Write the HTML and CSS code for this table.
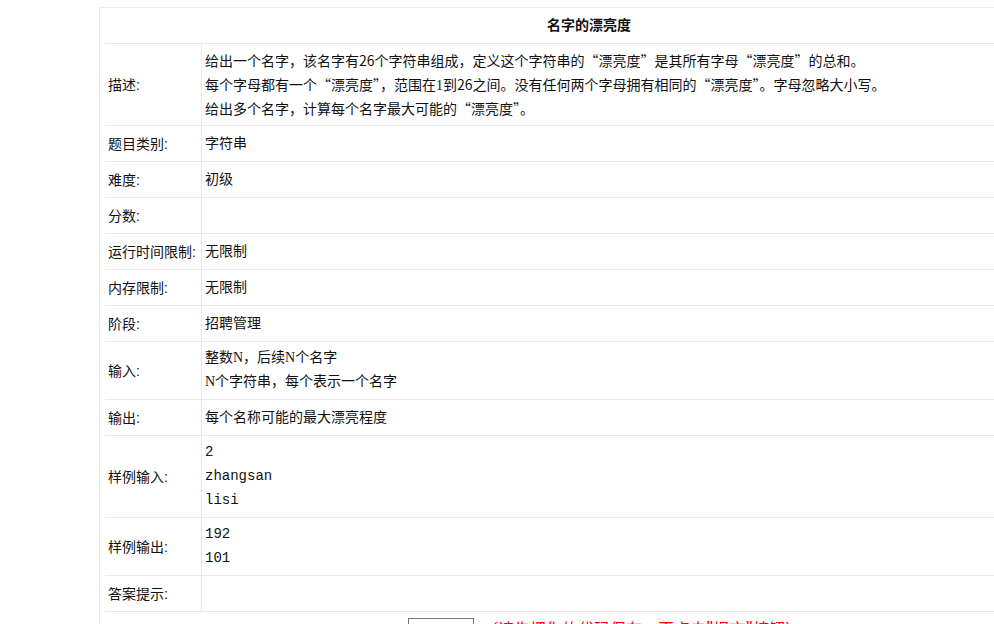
FILE: index.html
```html
<!DOCTYPE html>
<html lang="zh-CN">
<head>
<meta charset="utf-8">
<title>名字的漂亮度</title>
<link rel="stylesheet" href="styles.css">
</head>
<body>
<div class="page">
  <div class="box">
    <table class="prob">
      <tr><th class="title" colspan="2">名字的漂亮度</th></tr>
      <tr>
        <td class="lbl">描述:</td>
        <td class="val cjk">给出一个名字，该名字有26个字符串组成，定义这个字符串的“漂亮度”是其所有字母“漂亮度”的总和。<br>每个字母都有一个“漂亮度”，范围在<span class="one">1</span>到26之间。没有任何两个字母拥有相同的“漂亮度”。字母忽略大小写。<br>给出多个名字，计算每个名字最大可能的“漂亮度”。</td>
      </tr>
      <tr><td class="lbl">题目类别:</td><td class="val">字符串</td></tr>
      <tr><td class="lbl">难度:</td><td class="val">初级</td></tr>
      <tr><td class="lbl">分数:</td><td class="val"></td></tr>
      <tr><td class="lbl">运行时间限制:</td><td class="val">无限制</td></tr>
      <tr><td class="lbl">内存限制:</td><td class="val">无限制</td></tr>
      <tr><td class="lbl">阶段:</td><td class="val">招聘管理</td></tr>
      <tr><td class="lbl">输入:</td><td class="val serif">整数N，后续N个名字<br>N个字符串，每个表示一个名字</td></tr>
      <tr><td class="lbl">输出:</td><td class="val">每个名称可能的最大漂亮程度</td></tr>
      <tr><td class="lbl">样例输入:</td><td class="val mono">2<br>zhangsan<br>lisi</td></tr>
      <tr><td class="lbl">样例输出:</td><td class="val mono">192<br>101</td></tr>
      <tr><td class="lbl">答案提示:</td><td class="val"></td></tr>
    </table>
    <div class="submit">
      <span class="field"></span>
      <span class="note">（请先把你的代码保存，再点击"提交"按钮）</span>
    </div>
  </div>
</div>
</body>
</html>
```
FILE: styles.css
```css
html, body {
  margin: 0;
  padding: 0;
  background: #fff;
  overflow: hidden;
}
body {
  font-family: "Liberation Sans", "Noto Sans CJK SC", sans-serif;
  font-size: 14px;
  color: #111;
}
.page {
  padding: 7px 0 0 99px;
}
.box {
  width: 980px;
  border-top: 1px solid #ececec;
  border-left: 1px solid #ececec;
  padding-left: 5px;
}
.prob {
  width: 968px;
  border-collapse: collapse;
}
.prob th, .prob td {
  border-bottom: 1px solid #e9e9e9;
  text-align: left;
  vertical-align: middle;
  line-height: 24px;
}
.prob .title {
  text-align: center;
  font-weight: bold;
  height: 35px;
  padding: 0;
  line-height: 35px;
}
.prob .lbl {
  width: 93px;
  padding: 6px 0 5px 3px;
  border-right: 1px solid #e9e9e9;
  white-space: nowrap;
}
.prob .val {
  padding: 4px 0 5px 3px;
}
.cjk {
  font-family: "Noto Sans CJK SC", sans-serif;
}
.serif {
  font-family: "Liberation Serif", "Noto Sans CJK SC", serif;
}
.one {
  font-family: "Liberation Serif", serif;
  line-height: 1;
}
.prob .mono {
  font-family: "Liberation Mono", monospace;
  font-size: 14px;
}
.submit {
  display: flex;
  align-items: flex-start;
  padding: 6px 0 10px 303px;
  gap: 8px;
}
.field {
  display: block;
  width: 64px;
  height: 20px;
  border: 1px solid #767676;
  background: #fff;
}
.note {
  color: #f00;
  font-family: "Noto Sans CJK SC", sans-serif;
  font-size: 16px;
  line-height: 20px;
  padding-top: 0;
}
```
